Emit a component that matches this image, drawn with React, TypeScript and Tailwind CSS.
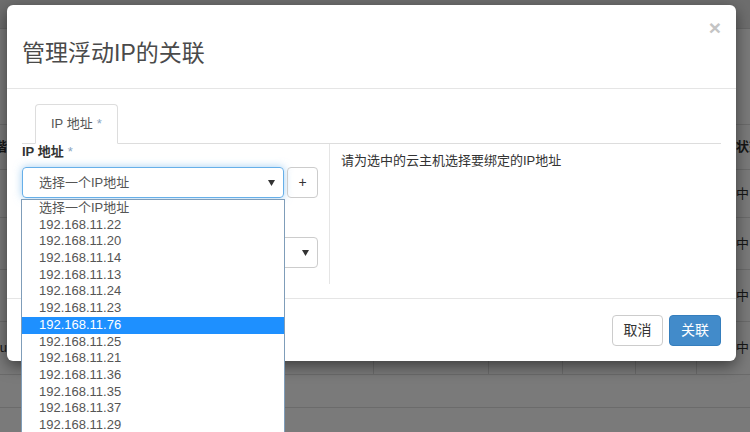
const font = { fontFamily: '"Liberation Sans", "Noto Sans CJK SC", sans-serif' };

const options = [
  "选择一个IP地址",
  "192.168.11.22",
  "192.168.11.20",
  "192.168.11.14",
  "192.168.11.13",
  "192.168.11.24",
  "192.168.11.23",
  "192.168.11.76",
  "192.168.11.25",
  "192.168.11.21",
  "192.168.11.36",
  "192.168.11.35",
  "192.168.11.37",
  "192.168.11.29",
];

const Caret = () => (
  <svg width="7" height="6" viewBox="0 0 7 6" className="shrink-0">
    <path d="M0 0 L7 0 L3.5 6 Z" fill="#333" />
  </svg>
);

type RowProps = { h: string; left?: string; right?: string; bold?: boolean; cols?: boolean };

// table rows of the page behind the backdrop
const BgRow = ({ h, left, right, bold, cols }: RowProps) => (
  <div className={`flex ${h} border-b border-[#6b6b6b] text-[13px] text-[#161616] ${bold ? "font-bold" : ""}`}>
    <div className="w-[7px] overflow-hidden flex justify-end items-center whitespace-nowrap">{left}</div>
    <div className="flex-1 flex">
      {cols && (
        <>
          <div className="w-[367px] border-r border-[#6b6b6b]" />
          <div className="w-[115px] border-r border-[#6b6b6b]" />
          <div className="w-[74px] border-r border-[#6b6b6b]" />
          <div className="w-[73px] border-r border-[#6b6b6b]" />
          <div className="w-[61px] border-r border-[#6b6b6b]" />
        </>
      )}
    </div>
    <div className="w-[14px] overflow-hidden flex items-center whitespace-nowrap">{right}</div>
  </div>
);

export default function App() {
  return (
    <div className="relative w-[750px] h-[432px] overflow-hidden bg-[#7a7a7a]" style={font}>
      {/* page behind */}
      <div className="flex flex-col">
        <div className="h-[29px] bg-[#6e6e6e] border-b border-[#666]" />
        <div className="h-[96px] border-b border-[#6b6b6b]" />
        <BgRow h="h-[45px]" left="偕" right="状态" bold />
        <BgRow h="h-[48px]" right="中" />
        <BgRow h="h-[52px]" right="中" />
        <BgRow h="h-[52px]" right="中" />
        <BgRow h="h-[53px]" left="u" right="中" cols />
        <BgRow h="h-[33px]" />
        <div className="h-[30px]" />
      </div>

      {/* modal */}
      <div className="absolute left-[7px] top-[5px] w-[729px] h-[356px] bg-white rounded-[6px] shadow-[0_5px_15px_rgba(0,0,0,0.5)] flex flex-col">
        <div className="relative h-[84px] border-b border-[#e5e5e5] px-[15px] pt-[34px]">
          <h4 className="text-[23px] leading-[28px] text-[#4a4a4a]">管理浮动IP的关联</h4>
          <button className="absolute right-[15px] top-[12px] text-[21px] font-bold leading-none text-[#c4c4c4]">×</button>
        </div>

        <div className="px-[15px] pt-[15px] pb-[14px]">
          <div className="flex border-b border-[#ddd] pl-[13px]">
            <div className="-mb-px h-[40px] px-[15px] flex items-center border border-[#ddd] border-b-white rounded-t-[4px] bg-white text-[13px] text-[#555]">
              IP 地址<span className="ml-[4px] text-[#8aa4c0]">*</span>
            </div>
          </div>

          <div className="flex h-[140px]">
            <div className="w-[307px] pr-[11px] flex flex-col">
              <label className="h-[16px] leading-[16px] text-[13px] font-bold text-[#333]">
                IP 地址<span className="ml-[4px] font-normal text-[#8aa4c0]">*</span>
              </label>
              <div className="mt-[7px] flex gap-[3px]">
                <div className="w-[262px] h-[31px] rounded-[4px] border border-[#66afe9] shadow-[0_0_8px_rgba(102,175,233,0.6)] flex items-center justify-between pl-[16px] pr-[8px] text-[13px] text-[#555]">
                  <span>选择一个IP地址</span>
                  <Caret />
                </div>
                <button className="w-[31px] h-[31px] rounded-[4px] border border-[#ccc] text-[14px] text-[#333] flex items-center justify-center">
                  +
                </button>
              </div>
              <div className="mt-[16px] h-[16px]" />
              <div className="mt-[7px] w-[296px] h-[31px] rounded-[4px] border border-[#ccc] flex items-center justify-end pr-[8px]">
                <Caret />
              </div>
            </div>
            <div className="flex-1 border-l border-[#e5e5e5] pl-[11px] pt-[8px] text-[13px] leading-[18px] text-[#333]">
              请为选中的云主机选择要绑定的IP地址
            </div>
          </div>
        </div>

        <div className="border-t border-[#e5e5e5] px-[15px] pt-[16px] pb-[15px] flex justify-end gap-[6px]">
          <button className="w-[51px] h-[31px] rounded-[4px] border border-[#ccc] bg-white text-[14px] text-[#333]">取消</button>
          <button className="w-[52px] h-[31px] rounded-[4px] border border-[#357ebd] bg-[#428bca] text-[14px] text-white">关联</button>
        </div>
      </div>

      {/* open select list */}
      <ul className="absolute left-[21px] top-[199px] w-[264px] h-[240px] bg-white border border-[#7f9db9] text-[13px] text-[#555]">
        {options.map((o, i) => (
          <li
            key={o}
            className={`h-[16.7px] leading-[16.7px] pl-[17px] whitespace-nowrap ${i === 7 ? "bg-[#1e90ff] text-white" : ""}`}
          >
            {o}
          </li>
        ))}
      </ul>
    </div>
  );
}
